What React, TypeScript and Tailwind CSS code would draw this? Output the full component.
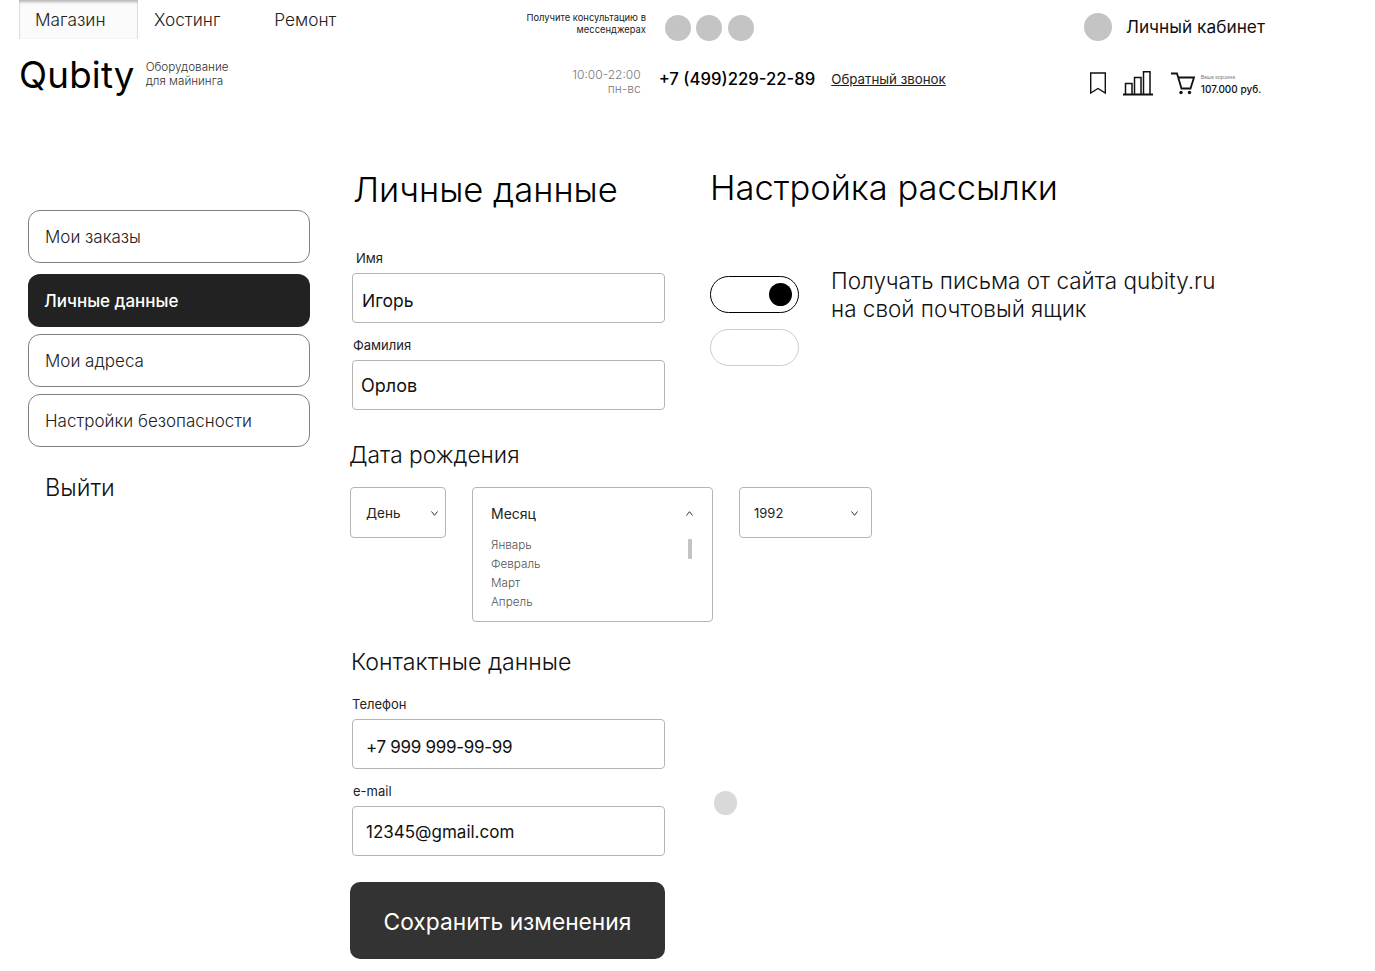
import React from 'react';

const font = "font-['Inter','Noto_Sans',sans-serif]";

function Dot({ className }: { className: string }) {
  return <span className={`block rounded-full ${className}`} />;
}

function SideItem({ label, active, y }: { label: string; active?: boolean; y: string }) {
  return (
    <div
      className={`flex h-[53px] w-[282px] items-center rounded-[12px] pl-[16px] pt-[2px] text-[17px] ${y} ${
        active ? 'bg-[#222222] font-medium text-white' : 'border border-[#808080] font-light text-[#222]'
      }`}
    >
      {label}
    </div>
  );
}

function Field({ label, value, x, box, labelMt }: { label: string; value: string; x: string; box: string; labelMt: string }) {
  return (
    <div className="flex flex-col">
      <span className={`text-[13px] leading-[16px] text-[#222] ${labelMt} ${x}`}>{label}</span>
      <div className={`ml-[2px] mt-[7px] flex h-[50px] w-[313px] items-center rounded-[4px] border border-[#b5b5b5] text-[#111] ${box}`}>
        {value}
      </div>
    </div>
  );
}

function Chevron({ up }: { up?: boolean }) {
  return (
    <svg width="7" height="5" viewBox="0 0 7 5" fill="none" stroke="#333" strokeWidth="1">
      <path d={up ? 'M.5 4.5 3.5.7l3 3.8' : 'M.5.5l3 3.8 3-3.8'} />
    </svg>
  );
}

export default function App() {
  return (
    <div className={`h-[971px] w-[1375px] overflow-hidden bg-white text-black ${font}`}>
      {/* top row */}
      <div className="flex h-[45px] items-start pl-[19px]">
        <div className="flex h-[39px] w-[119px] items-start bg-[#fbfbfb] pl-[16px] pt-[10px] text-[17.300px] font-light leading-[20px] text-[#222] shadow-[inset_0_4px_3px_-2px_#b5b5b5,inset_1px_0_1px_#ddd,inset_-1px_0_1px_#ddd]">
          Магазин
        </div>
        <span className="ml-[16px] mt-[10px] text-[17.300px] font-light leading-[20px] text-[#222]">Хостинг</span>
        <span className="ml-[54px] mt-[10px] text-[17.300px] font-light leading-[20px] text-[#222]">Ремонт</span>
        <div className="ml-auto mt-[12px] w-[130px] text-right text-[9.400px] leading-[12px] text-[#222]">
          Получите консультацию в мессенджерах
        </div>
        <div className="ml-[19px] mr-[330px] mt-[15px] flex gap-[5.500px]">
          <Dot className="h-[26px] w-[26px] bg-[#c4c4c4]" />
          <Dot className="h-[26px] w-[26px] bg-[#c4c4c4]" />
          <Dot className="h-[26px] w-[26px] bg-[#c4c4c4]" />
        </div>
        <div className="mr-[110px] mt-[13px] flex items-center gap-[14px]">
          <Dot className="h-[28px] w-[28px] bg-[#c4c4c4]" />
          <span className="text-[17.300px] font-normal text-[#111]">Личный кабинет</span>
        </div>
      </div>

      {/* logo row */}
      <div className="flex h-[65px] items-start pl-[19px]">
        <span className="mt-[6px] text-[36.700px] font-normal leading-[48px] tracking-[0.2px]">Qubity</span>
        <span className="ml-[11px] mt-[15px] w-[100px] text-[11.700px] font-light leading-[14px] text-[#333]">
          Оборудование для майнинга
        </span>
        <div className="ml-[325px] mt-[23px] w-[70px] text-right text-[12px] font-light leading-[14px] text-[#777]">
          10:00-22:00
          <br />
          пн-вс
        </div>
        <span className="ml-[18px] mt-[22px] text-[16.700px] font-medium leading-[24px]">+7 (499)229-22-89</span>
        <span className="ml-[16px] mt-[26px] text-[13.300px] font-normal leading-[17px] text-[#222] underline">
          Обратный звонок
        </span>
        <svg className="ml-[143px] mt-[27px]" width="18" height="24" viewBox="0 0 18 24" fill="none" stroke="#111" strokeWidth="1.400">
          <path d="M1.700 1h14.600v20L9 16.500l-7.300 4.500z" />
        </svg>
        <svg className="ml-[16px] mt-[26px]" width="30" height="25" viewBox="0 0 30 25" fill="none" stroke="#111" strokeWidth="1.500">
          <path d="M2.500 23V12.500H9V23M11.500 23V6.500H18V23M20.500 23V.8H27V23" />
          <path d="M0 23.500h30" strokeWidth="2" />
        </svg>
        <svg className="ml-[18px] mt-[27px]" width="25" height="24" viewBox="0 0 25 24" fill="none" stroke="#111" strokeWidth="1.800">
          <path d="M0 1.500h6l4.500 15h9l3.500-11H7.500" />
          <circle cx="10" cy="20.500" r="1.700" fill="#111" stroke="none" />
          <circle cx="18.500" cy="20.500" r="1.700" fill="#111" stroke="none" />
        </svg>
        <div className="ml-[5px] mt-[29px] flex flex-col">
          <span className="text-[5px] leading-[6px] text-[#777]">Ваша корзина</span>
          <span className="mt-[3px] text-[10px] font-medium leading-[12px] text-[#111]">107.000 руб.</span>
        </div>
      </div>

      <div className="flex">
        {/* sidebar */}
        <aside className="ml-[28px] w-[322px] shrink-0 pt-[100px]">
          <SideItem label="Мои заказы" y="" />
          <SideItem label="Личные данные" active y="mt-[11px]" />
          <SideItem label="Мои адреса" y="mt-[7px]" />
          <SideItem label="Настройки безопасности" y="mt-[7px]" />
          <div className="ml-[17px] mt-[26px] text-[23.500px] font-light leading-[30px] text-[#111]">Выйти</div>
        </aside>

        <main className="flex flex-col">
          {/* personal data + mailing */}
          <section className="flex">
            <div className="flex w-[360px] shrink-0 flex-col">
              <h1 className="ml-[3px] mt-[57px] text-[34.600px] font-light leading-[44px]">Личные данные</h1>
              <Field label="Имя" value="Игорь" x="ml-[6px]" box="pl-[9px] pt-[7px] text-[17.500px]" labelMt="mt-[39px]" />
              <Field label="Фамилия" value="Орлов" x="ml-[3px]" box="pl-[8px] pt-[1px] text-[18px]" labelMt="mt-[14px]" />
            </div>
            <div className="flex flex-col">
              <h2 className="mt-[56px] text-[34.500px] font-light leading-[44px]">Настройка рассылки</h2>
              <div className="mt-[66px] flex">
                <div className="flex w-[121px] shrink-0 flex-col gap-[16px]">
                  <div className="flex h-[37px] w-[89px] items-center justify-end rounded-full border-[1.500px] border-black pr-[6px]">
                    <span className="h-[23px] w-[23px] rounded-full bg-black" />
                  </div>
                  <div className="h-[37px] w-[89px] rounded-full border border-[#cccccc]" />
                </div>
                <p className="-mt-[9px] text-[22.500px] font-light leading-[28px] text-[#111]">
                  Получать письма от сайта qubity.ru
                  <br />
                  на свой почтовый ящик
                </p>
              </div>
            </div>
          </section>

          {/* birth date */}
          <section className="mt-[29px] flex flex-col">
            <h3 className="-ml-[1px] text-[22.750px] font-light leading-[32px] text-[#111]">Дата рождения</h3>
            <div className="mt-[16px] flex items-start text-[13.500px] text-[#222]">
              <div className="flex h-[51px] w-[96px] items-center justify-between rounded-[4px] border border-[#b5b5b5] pl-[15px] pr-[7px] pt-[2px]">
                День
                <Chevron />
              </div>
              <div className="ml-[26px] h-[135px] w-[241px] rounded-[4px] border border-[#b5b5b5]">
                <div className="flex h-[50px] items-center justify-between pl-[18px] pr-[19px]">
                  <span className="text-[14px]">Месяц</span>
                  <Chevron up />
                </div>
                <div className="-mt-[2px] flex justify-between pl-[18px] pr-[20px]">
                  <ul className="text-[11.700px] font-light leading-[19px] text-[#555]">
                    <li>Январь</li>
                    <li>Февраль</li>
                    <li>Март</li>
                    <li>Апрель</li>
                  </ul>
                  <span className="mt-[3px] h-[20px] w-[4px] rounded-[1px] bg-[#c4c4c4]" />
                </div>
              </div>
              <div className="ml-[26px] flex h-[51px] w-[133px] items-center justify-between rounded-[4px] border border-[#b5b5b5] pl-[14px] pr-[13px] pt-[2px]">
                <span className="text-[13px]">1992</span>
                <Chevron />
              </div>
            </div>
          </section>

          {/* contacts */}
          <section className="mt-[24px] flex">
            <div className="flex w-[364px] shrink-0 flex-col">
              <h3 className="ml-[1px] text-[23.200px] font-light leading-[32px] text-[#111]">Контактные данные</h3>
              <Field label="Телефон" value="+7 999 999-99-99" x="ml-[2px]" box="pl-[13px] pt-[7px] text-[17px] tracking-[-0.3px]" labelMt="mt-[18px]" />
              <Field label="e-mail" value="12345@gmail.com" x="ml-[3px]" box="pl-[13px] pt-[3px] text-[17px]" labelMt="mt-[14px]" />
              <button className="mt-[26px] flex h-[77px] w-[315px] items-center justify-center rounded-[10px] bg-[#333333] pt-[4px] text-[22.750px] font-normal text-white">
                Сохранить изменения
              </button>
            </div>
            <Dot className="mt-[145px] h-[24px] w-[23px] bg-[#d9d9d9]" />
          </section>
        </main>
      </div>
    </div>
  );
}
